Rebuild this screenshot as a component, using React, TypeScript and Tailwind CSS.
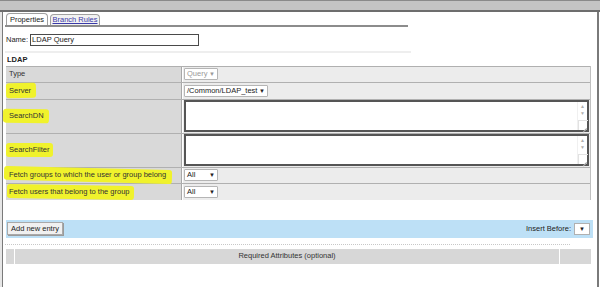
import React from 'react';

const Hl: React.FC<{ children: React.ReactNode; className?: string }> = ({ children, className = '' }) => (
    <span className="relative inline-block">
        <span className={`absolute bg-[#f0f22c] rounded-[3px] ${className}`} />
        <span className="relative">{children}</span>
    </span>
);

const Select: React.FC<{ label: string; width: string; disabled?: boolean }> = ({ label, width, disabled }) => (
    <div className={`flex items-center justify-between h-[12px] ${width} bg-white border border-[#b5b5b5] rounded-[1px] px-[2px] ${disabled ? 'text-[#9a9a9a]' : 'text-[#222]'}`}>
        <span>{label}</span>
        <span className="text-[6px] leading-none">▼</span>
    </div>
);

const TextArea: React.FC = () => (
    <div className="flex h-[32px] w-full bg-white border-2 border-[#555]">
        <div className="flex-1" />
        <div className="w-[10px] flex flex-col items-center border-l border-[#f0f0f0] text-[#b0b0b0] text-[5px] leading-[7px] pt-[1px]">
            <span>▲</span>
            <span>▼</span>
            <div className="mt-auto w-[10px] h-[10px] border-l border-t border-[#e2e2e2] relative">
                <span className="absolute right-[1px] bottom-[1px] w-[5px] h-px bg-[#aaa] -rotate-45 origin-bottom-right" />
                <span className="absolute right-[1px] bottom-[1px] w-[3px] h-px bg-[#aaa] -rotate-45 origin-bottom-right" />
            </div>
        </div>
    </div>
);

interface RowProps {
    label: React.ReactNode;
    children: React.ReactNode;
    height: string;
}

const Row: React.FC<RowProps> = ({ label, children, height }) => (
    <div className={`flex border-t border-[#b0b0b0] ${height}`}>
        <div className="w-[176px] shrink-0 bg-[#d9d9d9] border-r border-[#a8a8a8] flex items-center pl-[3px] text-[#333]">
            {label}
        </div>
        <div className="flex-1 bg-[#ececec] border-l border-white flex items-center px-[1px]">
            {children}
        </div>
    </div>
);

export default function App() {
    return (
        <div className="w-[600px] h-[287px] bg-white overflow-hidden flex flex-col font-['Liberation_Sans',Arial,sans-serif] text-[7.5px] leading-none text-[#222]">
            <div className="h-[12px] shrink-0 bg-[#c4c4c4] border-t border-[#8a8a8a] border-b-2 border-b-[#6d6d6d]" />
            <div className="flex flex-1">
                <div className="w-[3px] bg-[#e6e6e6] border-r border-[#7a7a7a]" />
                <div className="flex-1 flex flex-col pl-[2px] pr-[2px]">
                    {/* tabs */}
                    <div className="flex items-end pt-[1px] pl-[1px] w-[403px] border-b-2 border-[#8c8c8c]">
                        <div className="h-[12px] w-[42px] flex items-center justify-center bg-white border border-b-0 border-[#a0a0a0] rounded-t-[4px]">
                            Properties
                        </div>
                        <div className="ml-[2px] h-[11px] w-[50px] flex items-center justify-center bg-[#f2f2f2] border border-b-0 border-[#a0a0a0] rounded-t-[4px] text-[#3a3aa8] underline">
                            Branch Rules
                        </div>
                    </div>
                    {/* name */}
                    <div className="flex items-center mt-[7px] pl-[1px] h-[12px]">
                        <span className="mr-[2px]">Name:</span>
                        <div className="h-[12px] w-[169px] border border-[#4a4a4a] flex items-center pl-[1px]">LDAP Query</div>
                    </div>
                    <div className="mt-[5px] h-[2px] w-[406px] bg-[#eeeeee]" />
                    <div className="mt-[3px] pl-[2px] font-bold">LDAP</div>
                    {/* table */}
                    <div className="mt-[2px] ml-[1px] w-[585px] border-r border-[#c0c0c0]">
                        <Row height="h-[16px]" label="Type">
                            <Select label="Query" width="w-[34px]" disabled />
                        </Row>
                        <Row height="h-[17px]" label={<Hl className="-left-[3px] -right-[5px] -top-[4px] -bottom-[3px] -rotate-1">Server</Hl>}>
                            <Select label="/Common/LDAP_test" width="w-[84px]" />
                        </Row>
                        <Row height="h-[34px]" label={<Hl className="-left-[6px] -right-[5px] -top-[3px] -bottom-[3px] rotate-1">SearchDN</Hl>}>
                            <TextArea />
                        </Row>
                        <Row height="h-[34px]" label={<Hl className="-left-[3px] -right-[4px] -top-[3px] -bottom-[3px]">SearchFilter</Hl>}>
                            <TextArea />
                        </Row>
                        <Row height="h-[16px]" label={<Hl className="-left-[5px] right-[-6px] -top-[3px] -bottom-[3px] rotate-[1.5deg]">Fetch groups to which the user or group belong</Hl>}>
                            <Select label="All" width="w-[34px]" />
                        </Row>
                        <Row height="h-[17px]" label={<Hl className="-left-[2px] -right-[4px] -top-[3px] -bottom-[3px] rotate-[1deg]">Fetch users that belong to the group</Hl>}>
                            <Select label="All" width="w-[34px]" />
                        </Row>
                    </div>
                    {/* add entry bar */}
                    <div className="mt-[20px] ml-[1px] w-[587px] h-[18px] bg-[#bde0f6] flex items-center justify-between pl-[1px] pr-[3px]">
                        <div className="h-[13px] px-[3px] flex items-center bg-[#f0f0f0] border border-[#a9a9a9] shadow-[1px_1px_0_#9a9a9a]">
                            Add new entry
                        </div>
                        <div className="flex items-center">
                            <span className="mr-[3px]">Insert Before:</span>
                            <div className="h-[12px] w-[16px] bg-white border border-[#b0b0b0] flex items-center justify-center text-[6px]">▼</div>
                        </div>
                    </div>
                    <div className="mt-[6px] w-[565px] border-t border-dotted border-[#c8c8c8]" />
                    <div className="mt-[4px] ml-[1px] w-[585px] h-[15px] bg-[#d7d7d7] flex">
                        <div className="w-[9px] border-r border-white" />
                        <div className="flex-1 flex items-center justify-center text-[#333]">Required Attributes (optional)</div>
                        <div className="w-[32px] border-l border-white" />
                    </div>
                </div>
                <div className="w-[3px] border-l-2 border-[#7a7a7a] bg-white" />
            </div>
        </div>
    );
}
